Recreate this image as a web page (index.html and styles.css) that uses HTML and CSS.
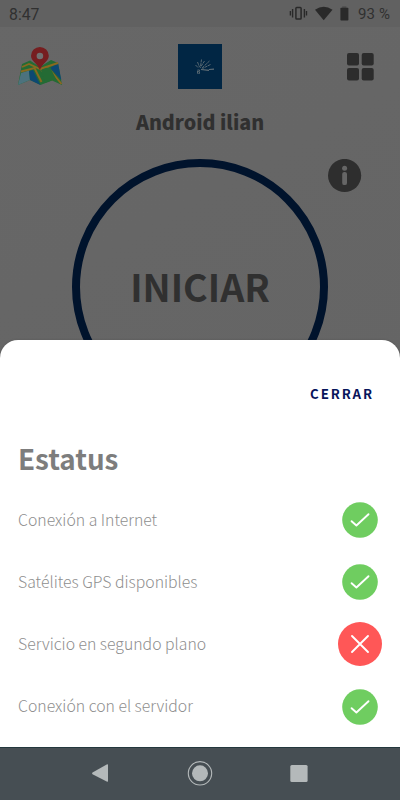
FILE: index.html
```html
<!DOCTYPE html>
<html lang="es">
<head>
<meta charset="utf-8">
<title>Estatus</title>
<link rel="stylesheet" href="styles.css">
</head>
<body>
<div class="phone">
  <div class="statusbar">
    <span class="time">8:47</span>
    <svg class="status-icons" width="62" height="16" viewBox="0 0 62 16">
      <rect x="6.9" y="1.5" width="5.2" height="11.5" rx=".8" fill="none" stroke="#292929" stroke-width="1.5"/>
      <path d="M3.6 3v8.4M1.4 5v4.5M15.4 3v8.4M17.5 5v4.5" stroke="#292929" stroke-width="1.4"/>
      <path d="M26 3.8Q34.7-2.2 43.5 3.8L34.7 14.3Z" fill="#292929"/>
      <path d="M53.2.3h4.2v2h-4.2z" fill="#4c4c4c"/>
      <rect x="51.4" y="1.8" width="8" height="12.7" rx=".8" fill="#292929"/>
    </svg>
    <span class="battery">93 %</span>
  </div>
  <main class="home">
    <header class="toolbar">
      <svg class="map" width="46" height="42" viewBox="0 0 46 42">
        <path d="M5 18 13 14.500 23 21 34 14 41 17 45 39 35 34.500 23.500 39 13 34 1 39Z" fill="#246b34"/>
        <path d="M4 27 12 24.500 13 34 1 39Z" fill="#4c727d"/>
        <path d="M12 25 16 24 23.500 39 13 34Z" fill="#0d4872"/>
        <path d="M33 22 41 17 44.300 34Z" fill="#0d4872"/>
        <path d="M4 25.500 17.500 22 24.500 36M5 21 12 18 23 23 41 17M30 20 44.500 38M24 24 36 34" fill="none" stroke="#8a6820" stroke-width="1.900"/>
        <path d="M24 24 33 21 40 35 35 34.500 28 37Z" fill="#246b34"/>
        <path d="M22.900 24C20 17 14 15 14 9.800a8.900 8.900 0 0 1 17.800 0c0 5.200-6 7.200-8.900 14.200Z" fill="#761e20"/>
        <circle cx="22.900" cy="10" r="3.300" fill="#707070"/>
      </svg>
      <svg class="logo" width="44" height="45" viewBox="0 0 44 45">
        <path d="M0 0H44V45H0Z" fill="#012644"/>
        <path d="M19.500 26h2v3.500h-2zM19.500 27.700h2M17.500 21l3 3M19.500 18l2 5M23.500 15.500l-1 7M26.500 17l-4.500 7M31.500 17l-8 7.500M32.500 20.500l-8 4" fill="none" stroke="#5b6a74" stroke-width=".95" stroke-dasharray="3 .6"/>
        <path d="M23 25.500l8 .8M31 25.500l5-.3" stroke="#626f77" stroke-width="1.200"/>
      </svg>
      <svg class="grid" width="27" height="28" viewBox="0 0 27 28">
        <g fill="#2c2c2c"><rect x="0" y="0" width="12" height="12.500" rx="2"/><rect x="14.700" y="0" width="12" height="12.500" rx="2"/><rect x="0" y="15" width="12" height="12.500" rx="2"/><rect x="14.700" y="15" width="12" height="12.500" rx="2"/></g>
      </svg>
    </header>
    <h1 class="device">Android ilian</h1>
    <div class="stage">
      <div class="start"><span class="start-label">INICIAR</span></div>
      <svg class="info" width="34" height="34" viewBox="0 0 34 34">
        <circle cx="16.600" cy="16.500" r="16.600" fill="#2e2e2e"/><circle cx="16.600" cy="9.300" r="2.500" fill="#666"/><rect x="14.200" y="12.900" width="4.800" height="13.200" rx="2.200" fill="#666"/>
      </svg>
    </div>
  </main>
  <section class="sheet">
    <div class="actions"><button class="close">CERRAR</button></div>
    <h2 class="title">Estatus</h2>
    <ul class="rows">
      <li class="row"><span class="label">Conexión a Internet</span><span class="mark"><svg width="36" height="36" viewBox="0 0 36 36"><circle cx="18" cy="18" r="17.800" fill="#6fcd60"/><path d="M9.600 19.200 14.400 23.500 26.500 12.200" class="stroke"/></svg></span></li>
      <li class="row"><span class="label">Satélites GPS disponibles</span><span class="mark"><svg width="36" height="36" viewBox="0 0 36 36"><circle cx="18" cy="18" r="17.800" fill="#6fcd60"/><path d="M9.600 19.200 14.400 23.500 26.500 12.200" class="stroke"/></svg></span></li>
      <li class="row"><span class="label">Servicio en segundo plano</span><span class="mark"><svg width="44" height="44" viewBox="0 0 44 44"><circle cx="22" cy="22" r="22" fill="#ff5757"/><path d="M14 14 30 30M30 14 14 30" class="stroke"/></svg></span></li>
      <li class="row"><span class="label">Conexión con el servidor</span><span class="mark"><svg width="36" height="36" viewBox="0 0 36 36"><circle cx="18" cy="18" r="17.800" fill="#6fcd60"/><path d="M9.600 19.200 14.400 23.500 26.500 12.200" class="stroke"/></svg></span></li>
    </ul>
  </section>
  <nav class="navbar">
    <svg width="400" height="53" viewBox="0 0 400 53">
      <g fill="#b4b9ba"><path d="M92.500 25.600 106.700 17.500Q108 17 108 18V34Q108 35.200 106.700 34.600L92.500 27.200Q91.500 26.400 92.500 25.600Z"/><circle cx="200" cy="26.300" r="8"/><rect x="290.300" y="18" width="17.300" height="17" rx="1.500"/></g>
      <circle cx="200" cy="26.300" r="11.700" fill="none" stroke="#b4b9ba" stroke-width="1.100"/>
    </svg>
  </nav>
</div>
</body>
</html>
```
FILE: styles.css
```css
* { box-sizing: border-box; }
body { margin: 0; font-family: "Noto Sans CJK SC", "Liberation Sans", sans-serif; }
.phone { width: 400px; height: 800px; overflow: hidden; display: flex; flex-direction: column; background: linear-gradient(150deg, #676767, #656565 60%, #5e5e5e); }
.statusbar { flex: none; height: 27px; padding: 1px 9px 0; display: flex; align-items: center; background: #616161; color: #303030; font-family: Roboto, sans-serif; font-size: 15.8px; }
.time { margin-right: auto; }
.status-icons { margin-right: 7px; }
.battery { width: 33px; white-space: nowrap; font-size: 15px; letter-spacing: .1px; }
.home { flex: none; height: 313px; overflow: hidden; }
.toolbar { display: grid; grid-template-columns: 1fr 44px 1fr; align-items: center; height: 79px; padding: 0 26px 0 17px; }
.logo { margin-left: 4px; }
.grid { justify-self: end; }
.device { margin: 0; height: 34px; line-height: 31px; text-align: center; color: #303030; font-size: 19.7px; font-weight: 900; }
.stage { display: grid; grid-template-columns: 72px 256px 72px; margin-top: 19px; }
.start { grid-column: 2; width: 256px; height: 256px; padding-bottom: 3px; border: 8.5px solid #00132c; border-radius: 50%; display: flex; align-items: center; justify-content: center; }
.start-label { font-size: 37.6px; line-height: 1; font-weight: 700; color: #303030; }
.info { grid-column: 3; }
.sheet { flex: none; height: 407px; border-radius: 18px 18px 0 0; background: #fff; padding: 37px 18px 0; box-shadow: 0 0 2px #3335; }
.actions { display: flex; justify-content: flex-end; }
.close { border: 0; background: none; padding: 0 8px 0 0; height: 34px; font: 700 13.3px/34px "Noto Sans CJK SC", sans-serif; letter-spacing: 1.9px; color: #07145b; }
.title { margin: 24px 0 0; height: 46px; line-height: 46px; font-size: 27.8px; font-weight: 700; color: #7d7d7d; }
.rows { list-style: none; margin: 8px 0 0; padding: 0 4px 0 0; }
.row { height: 62.2px; display: flex; align-items: center; justify-content: space-between; }
.label { padding-bottom: 2px; font-size: 15.8px; font-weight: 300; color: #8e8e8e; white-space: nowrap; }
.mark { width: 36px; display: flex; justify-content: center; }
.mark svg { flex: none; }
.stroke { fill: none; stroke: #fff; stroke-width: 1.9; stroke-linecap: round; stroke-linejoin: round; }
.navbar { flex: none; height: 53px; background: #464e53; border-top: 1px solid #24383d; }
.navbar svg { display: block; margin-top: -1px; }
```
